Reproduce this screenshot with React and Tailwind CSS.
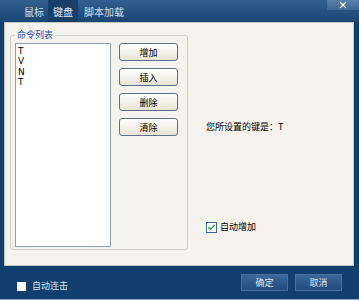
import { Check, X } from "lucide-react";

const cjk = { fontFamily: '"Noto Sans CJK SC", "Noto Sans", sans-serif' };

const SideButton = ({ label }) => (
  <button className="w-[59px] h-[18px] rounded-[3px] border border-[#5f7089] bg-gradient-to-b from-white to-[#e6e3d6] text-[9px] leading-none text-black">
    {label}
  </button>
);

const FooterButton = ({ label }) => (
  <button className="w-[47px] h-[17px] border border-[#48709d] bg-gradient-to-b from-[#3a6898] to-[#1f4c7c] text-[9px] leading-none text-[#dfe7f0]">
    {label}
  </button>
);

export default function App() {
  return (
    <div className="w-[359px] h-[300px] flex flex-col bg-[#11406e] overflow-hidden" style={cjk}>
      {/* title bar with tabs */}
      <div className="h-[22px] flex items-stretch bg-gradient-to-b from-[#30608f] to-[#1a4673]">
        <div className="flex items-stretch pl-[21px] text-[10px] text-[#d4deea]">
          <div className="w-[26px] flex items-center justify-center">鼠标</div>
          <div className="w-[30px] ml-[1px] flex items-center justify-center bg-[#173f69] text-[#e6edf5]">键盘</div>
          <div className="ml-[6px] flex items-center">脚本加载</div>
        </div>
        <div className="ml-auto w-[32px] h-[10px] flex items-center justify-center bg-gradient-to-b from-[#5a80aa] to-[#3c6693]">
          <X size={10} strokeWidth={3} className="text-white" />
        </div>
      </div>

      {/* main panel */}
      <div className="flex pl-[4px] pr-[5px]">
        <div className="w-[350px] h-[244px] bg-[#f4f3ee] border border-[#c9c7bd] flex pl-[5px] pt-[12px]">
          <div className="relative w-[178px] h-[215px] border border-[#d3d1c6] rounded-[3px] flex pl-[4px] pt-[7px]">
            <span className="absolute left-[4px] top-[-7px] px-[2px] bg-[#f4f3ee] text-[9px] leading-[11px] text-[#1b4fc4]">
              命令列表
            </span>
            <div className="w-[96px] h-[204px] bg-white border border-[#8aa2bc] pt-[2px] pl-[2px] text-[9px] leading-[10.3px] text-black" style={{ fontFamily: '"DejaVu Sans", sans-serif' }}>
              <div>T</div>
              <div>V</div>
              <div>N</div>
              <div>T</div>
            </div>
            <div className="ml-[8px] flex flex-col gap-[7px]">
              <SideButton label="增加" />
              <SideButton label="插入" />
              <SideButton label="删除" />
              <SideButton label="清除" />
            </div>
          </div>

          <div className="flex flex-col pl-[18px]">
            <div className="mt-[86px] text-[9px] leading-[12px] text-black">您所设置的键是：T</div>
            <div className="mt-[88px] flex items-center gap-[3px]">
              <div className="w-[11px] h-[11px] border border-[#3b6a9a] bg-white flex items-center justify-center">
                <Check size={9} strokeWidth={3.5} className="text-[#22a122]" />
              </div>
              <span className="text-[9px] leading-[12px] text-black">自动增加</span>
            </div>
          </div>
        </div>
      </div>

      {/* footer */}
      <div className="flex-1 flex items-start pt-[8px] pl-[17px] pr-[17px] border-b border-[#8ea8c4]">
        <div className="flex items-center mt-[7px] gap-[6px]">
          <div className="w-[9px] h-[9px] bg-white" />
          <span className="text-[9px] leading-[10px] text-[#dbe3ec]">自动连击</span>
        </div>
        <div className="ml-auto flex gap-[7px]">
          <FooterButton label="确定" />
          <FooterButton label="取消" />
        </div>
      </div>
    </div>
  );
}
